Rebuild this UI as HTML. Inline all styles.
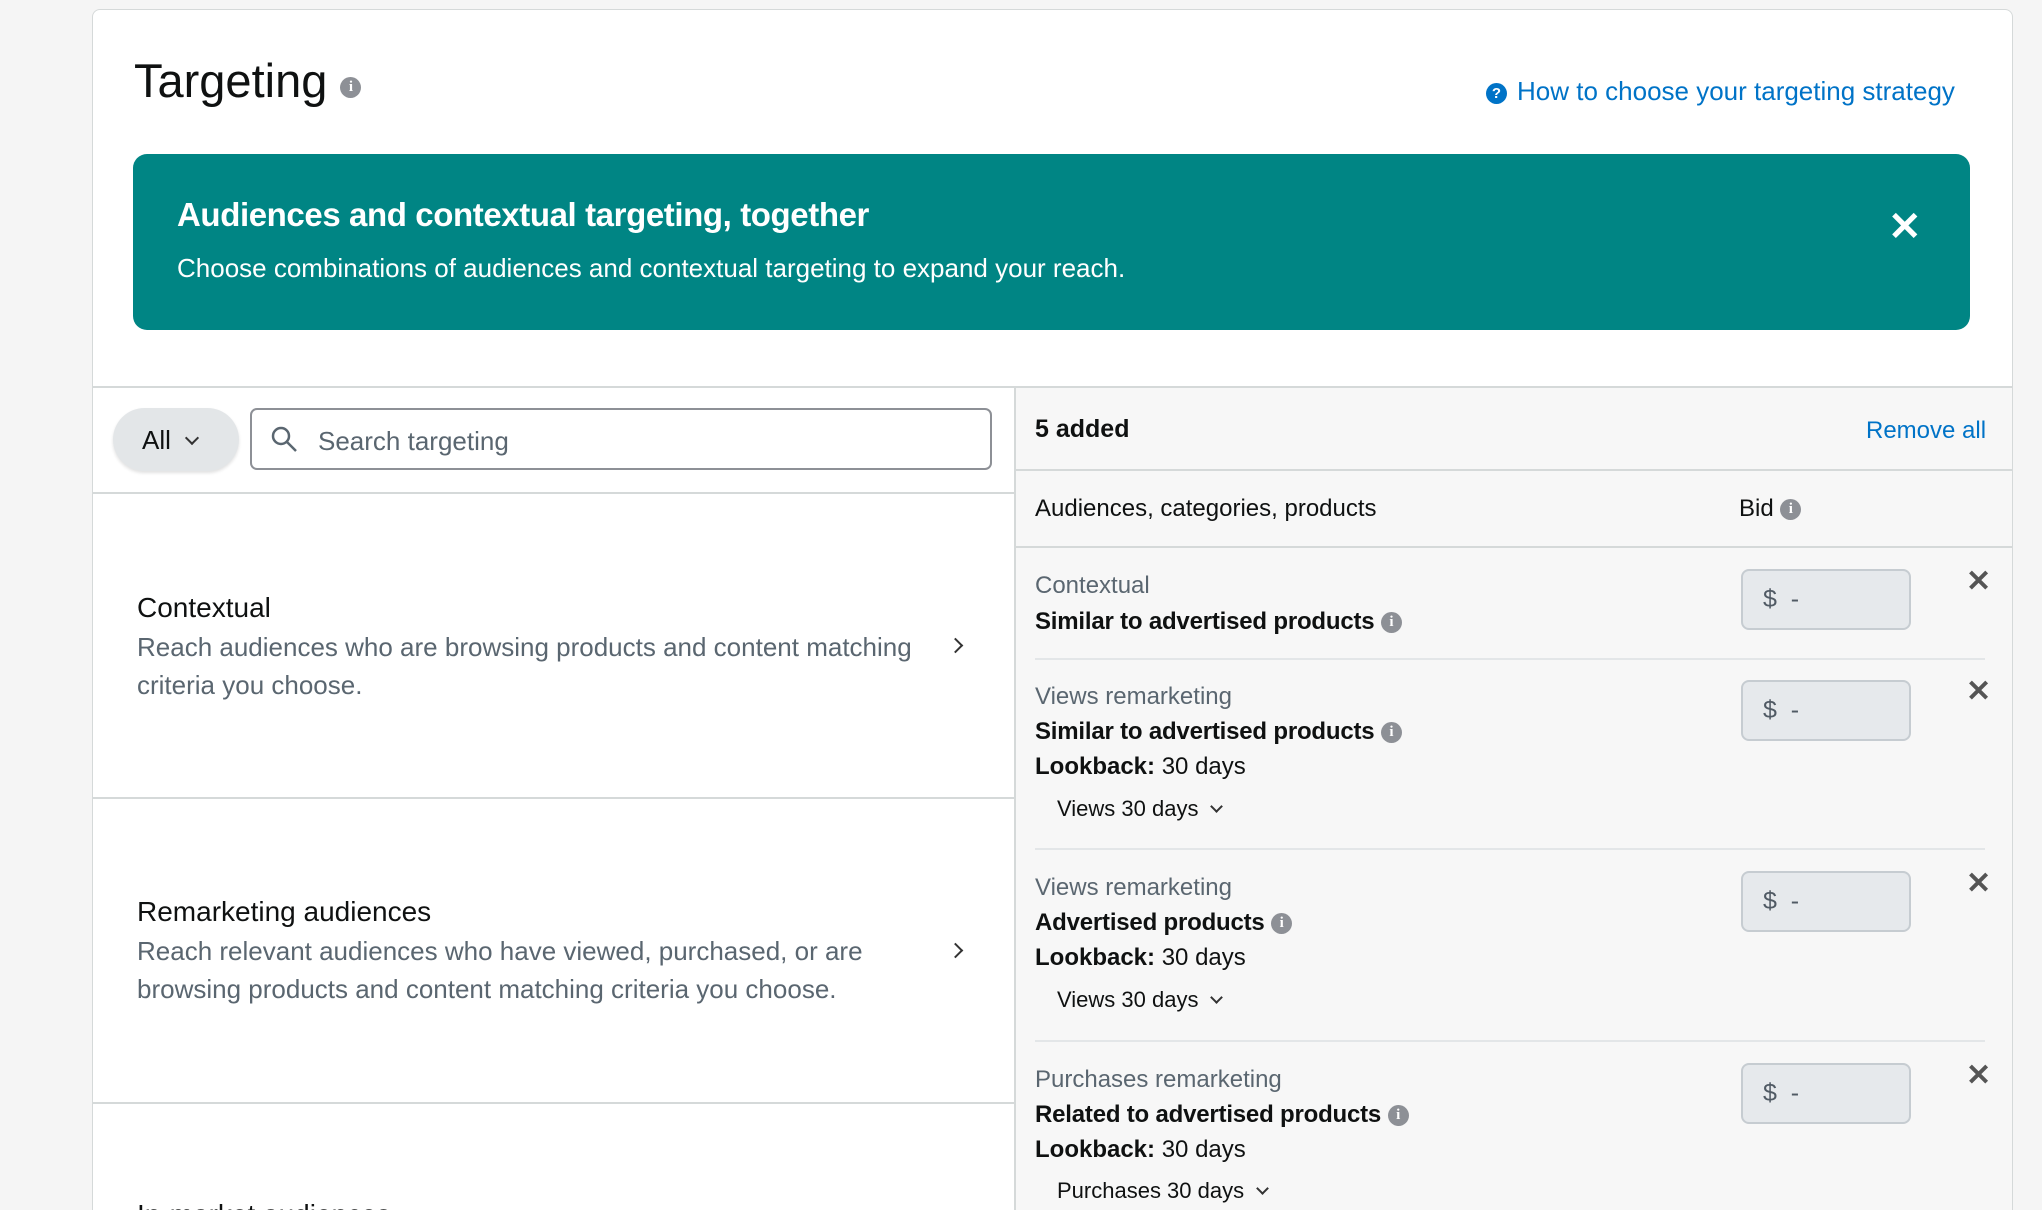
<!DOCTYPE html>
<html style="width:2042px;height:1210px;overflow:hidden"><head><meta charset="utf-8"><style>
*{box-sizing:border-box;margin:0;padding:0}
body{width:2042px;height:1210px;overflow:hidden;background:#f5f5f5;font-family:"Liberation Sans",sans-serif;color:#0f1111;position:relative}
.a{position:absolute;white-space:nowrap}
.card{position:absolute;left:92px;top:9px;width:1921px;height:1220px;background:#fff;border:1px solid #d5d9d9;border-radius:8px}
.info{display:inline-block;width:21px;height:21px;border-radius:50%;background:#8d9096;color:#fff;font-size:15px;font-weight:bold;text-align:center;line-height:21px;font-family:"Liberation Serif",serif;vertical-align:middle}
.lab{color:#5a6670;font-size:24px}
.b{font-weight:bold;font-size:24px;letter-spacing:-0.2px}
.t{font-size:24px}
.inp{position:absolute;left:1741px;width:170px;height:61px;background:#e6e9ec;border:2px solid #c6ccd1;border-radius:8px;color:#505a64;font-size:25px;padding:14px 0 0 20px}
.x{position:absolute;left:1966px;font-size:30px;color:#555;font-weight:bold}
.sep{position:absolute;left:1035px;width:950px;height:2px;background:#e3e6e8}
.chev{display:inline-block;width:11px;height:11px;border-right:2.5px solid #333;border-bottom:2.5px solid #333;transform:rotate(45deg);margin-left:14px;vertical-align:5px}
</style></head><body>
<div class="card"></div>
<div class="a" style="left:134px;top:53px;font-size:47px;color:#0f1111">Targeting <span class="info" style="vertical-align:6px">i</span></div>
<div class="a" style="left:1486px;top:76px;font-size:26px;color:#0073c7"><span style="display:inline-block;width:21px;height:21px;border-radius:50%;background:#0073c7;color:#fff;font-size:15px;font-weight:bold;text-align:center;line-height:21px;vertical-align:2px;margin-right:10px">?</span>How to choose your targeting strategy</div>
<div class="a" style="left:133px;top:154px;width:1837px;height:176px;background:#008584;border-radius:14px"></div>
<div class="a" style="left:177px;top:196px;font-size:33px;font-weight:bold;color:#fff;letter-spacing:-0.4px">Audiences and contextual targeting, together</div>
<div class="a" style="left:177px;top:253px;font-size:26px;color:#fff">Choose combinations of audiences and contextual targeting to expand your reach.</div>
<div class="a" style="left:1888px;top:204px;font-size:40px;font-weight:bold;color:#fff">✕</div>
<div class="a" style="left:92px;top:386px;width:1921px;height:2px;background:#d5d9d9"></div>
<div class="a" style="left:1014px;top:388px;width:998px;height:822px;background:#f7f7f7;border-left:2px solid #d5d9d9"></div>
<div class="a" style="left:113px;top:408px;width:126px;height:63px;background:#e3e6e8;border-radius:32px;box-shadow:0 2px 3px rgba(0,0,0,.12);font-size:26px;padding:17px 0 0 29px">All<span class="chev" style="width:10px;height:10px;margin-left:16px;vertical-align:6px"></span></div>
<div class="a" style="left:250px;top:408px;width:742px;height:62px;border:2px solid #8d9096;border-radius:7px;font-size:26px;color:#5a6670;padding:16px 0 0 66px">Search targeting</div>
<svg class="a" style="left:270px;top:425px" width="30" height="30" viewBox="0 0 30 30"><circle cx="11" cy="11" r="8" fill="none" stroke="#5a6670" stroke-width="2.5"/><line x1="17" y1="17" x2="26" y2="26" stroke="#5a6670" stroke-width="2.5"/></svg>
<div class="a" style="left:92px;top:492px;width:922px;height:2px;background:#d5d9d9"></div>
<div class="a" style="left:137px;top:592px;font-size:28px">Contextual</div>
<div class="a lab" style="left:137px;top:628px;font-size:26px;line-height:38px">Reach audiences who are browsing products and content matching<br>criteria you choose.</div>
<div class="a" style="left:950px;top:640px"><span class="chev" style="transform:rotate(-45deg);margin:0"></span></div>
<div class="a" style="left:92px;top:797px;width:922px;height:2px;background:#d5d9d9"></div>
<div class="a" style="left:137px;top:896px;font-size:28px">Remarketing audiences</div>
<div class="a lab" style="left:137px;top:932px;font-size:26px;line-height:38px">Reach relevant audiences who have viewed, purchased, or are<br>browsing products and content matching criteria you choose.</div>
<div class="a" style="left:950px;top:945px"><span class="chev" style="transform:rotate(-45deg);margin:0"></span></div>
<div class="a" style="left:92px;top:1102px;width:922px;height:2px;background:#d5d9d9"></div>
<div class="a" style="left:137px;top:1199px;font-size:28px">In-market audiences</div>

<div class="a" style="left:1035px;top:415px;font-size:25px;font-weight:bold">5 added</div>
<div class="a" style="left:1866px;top:417px;font-size:24px;color:#0073c7">Remove all</div>
<div class="a" style="left:1014px;top:469px;width:998px;height:2px;background:#d5d9d9"></div>
<div class="a t" style="left:1035px;top:495px">Audiences, categories, products</div>
<div class="a t" style="left:1739px;top:495px">Bid <span class="info">i</span></div>
<div class="a" style="left:1014px;top:546px;width:998px;height:2px;background:#d5d9d9"></div>

<div class="a lab" style="left:1035px;top:572px">Contextual</div>
<div class="a b" style="left:1035px;top:608px">Similar to advertised products <span class="info">i</span></div>
<div class="inp" style="top:569px">$ &nbsp;-</div><div class="x" style="top:564px">✕</div>
<div class="sep" style="top:658px"></div>

<div class="a lab" style="left:1035px;top:683px">Views remarketing</div>
<div class="a b" style="left:1035px;top:718px">Similar to advertised products <span class="info">i</span></div>
<div class="a t" style="left:1035px;top:753px"><b>Lookback:</b> 30 days</div>
<div class="a" style="left:1057px;top:796px;font-size:22px">Views 30 days<span class="chev" style="width:9px;height:9px;border-width:2px"></span></div>
<div class="inp" style="top:680px">$ &nbsp;-</div><div class="x" style="top:674px">✕</div>
<div class="sep" style="top:848px"></div>

<div class="a lab" style="left:1035px;top:874px">Views remarketing</div>
<div class="a b" style="left:1035px;top:909px">Advertised products <span class="info">i</span></div>
<div class="a t" style="left:1035px;top:944px"><b>Lookback:</b> 30 days</div>
<div class="a" style="left:1057px;top:987px;font-size:22px">Views 30 days<span class="chev" style="width:9px;height:9px;border-width:2px"></span></div>
<div class="inp" style="top:871px">$ &nbsp;-</div><div class="x" style="top:866px">✕</div>
<div class="sep" style="top:1040px"></div>

<div class="a lab" style="left:1035px;top:1066px">Purchases remarketing</div>
<div class="a b" style="left:1035px;top:1101px">Related to advertised products <span class="info">i</span></div>
<div class="a t" style="left:1035px;top:1136px"><b>Lookback:</b> 30 days</div>
<div class="a" style="left:1057px;top:1178px;font-size:22px">Purchases 30 days<span class="chev" style="width:9px;height:9px;border-width:2px"></span></div>
<div class="inp" style="top:1063px">$ &nbsp;-</div><div class="x" style="top:1058px">✕</div>
</body></html>
